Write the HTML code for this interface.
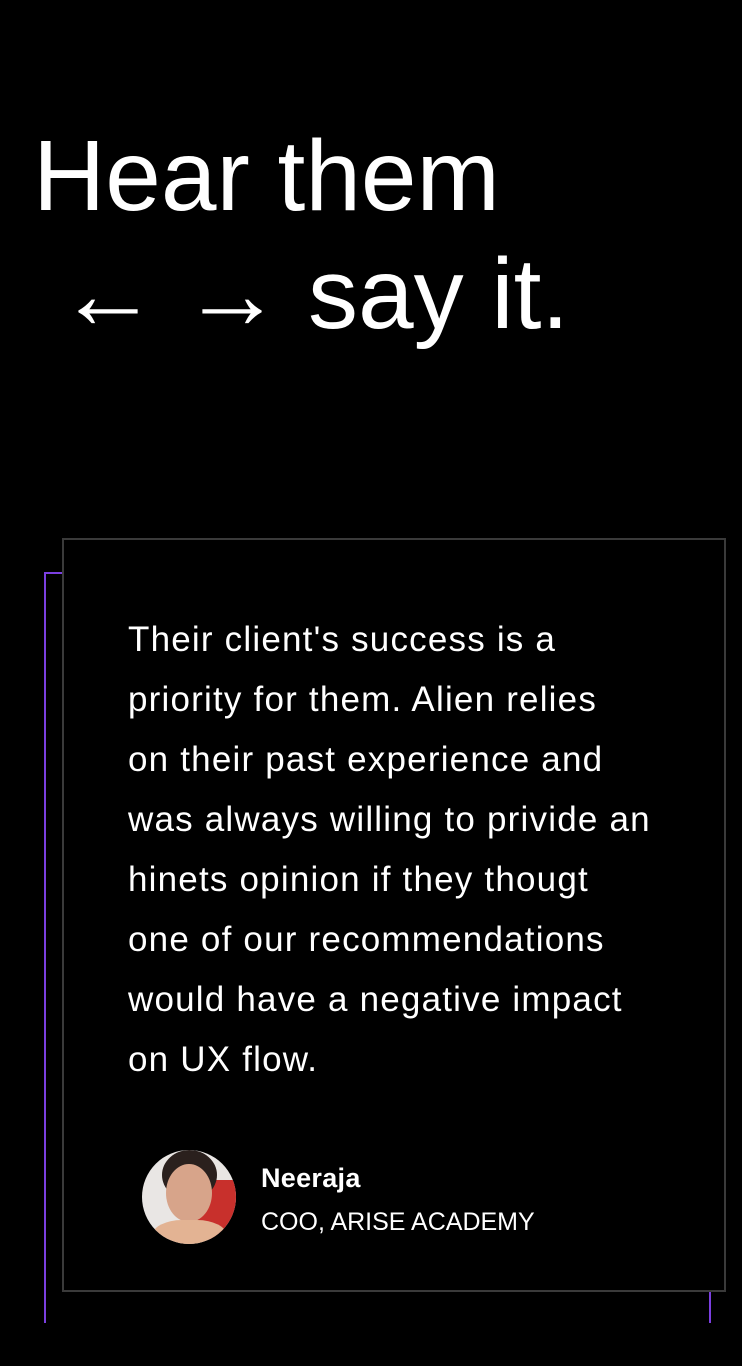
<!DOCTYPE html>
<html><head><meta charset="utf-8"><style>
html,body{margin:0;padding:0;background:#000;}
body{width:742px;height:1366px;position:relative;overflow:hidden;font-family:"Liberation Sans",sans-serif;color:#fff;}
.h{position:absolute;font-size:100px;line-height:1;white-space:nowrap;}
.purple{position:absolute;left:44px;top:572px;width:667px;height:751px;border-left:2px solid #7b3fe0;border-top:2px solid #7b3fe0;border-right:2px solid #7b3fe0;box-sizing:border-box;}
.box{position:absolute;left:62px;top:538px;width:664px;height:754px;border:2px solid #3a3a3a;background:#000;box-sizing:border-box;}
.q{position:absolute;left:128px;top:610px;font-size:35px;line-height:60px;white-space:nowrap;letter-spacing:1.2px;}
.av{position:absolute;left:142px;top:1150px;width:94px;height:94px;border-radius:50%;overflow:hidden;background:#e9e6e4;}
.n{position:absolute;left:261px;top:1163px;font-size:27px;font-weight:bold;letter-spacing:0.3px;}
.t{position:absolute;left:261px;top:1208px;font-size:25px;letter-spacing:0px;}
</style></head><body>
<div class="h" style="top:126px;left:33px">Hear them</div>
<div class="h" style="top:244px;left:58px">←</div>
<div class="h" style="top:244px;left:182px">→</div>
<div class="h" style="top:244px;left:308px">say it.</div>
<div class="purple"></div>
<div class="box"></div>
<div class="q">Their client's success is a<br>priority for them. Alien relies<br>on their past experience and<br>was always willing to privide an<br>hinets opinion if they thougt<br>one of our recommendations<br>would have a negative impact<br>on UX flow.</div>
<div class="av">
<div style="position:absolute;left:55px;top:30px;width:50px;height:60px;background:#c8302c;border-radius:30%"></div>
<div style="position:absolute;left:20px;top:0px;width:55px;height:50px;background:#2a201d;border-radius:50%"></div>
<div style="position:absolute;left:24px;top:14px;width:46px;height:58px;background:#d7a48a;border-radius:50%"></div>
<div style="position:absolute;left:10px;top:70px;width:75px;height:40px;background:#e3b393;border-radius:40%"></div>
</div>
<div class="n">Neeraja</div>
<div class="t">COO, ARISE ACADEMY</div>
</body></html>
